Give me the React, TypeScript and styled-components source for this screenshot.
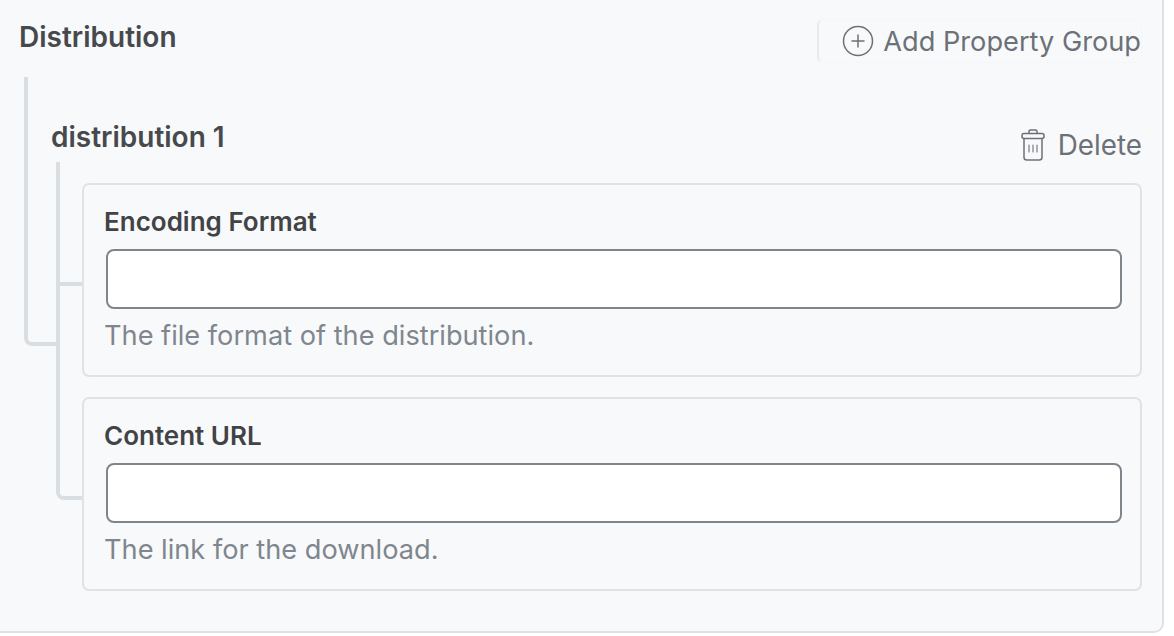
import styled, { createGlobalStyle } from 'styled-components'

const GlobalStyle = createGlobalStyle`
  html, body {
    margin: 0;
    padding: 0;
    background: #fff;
  }
  body {
    font-family: Inter, "Liberation Sans", sans-serif;
    overflow: hidden;
  }
`

const Panel = styled.section`
  box-sizing: border-box;
  width: 1164px;
  height: 633px;
  padding: 19px 20px 0 19px;
  background: #f8f9fb;
  border-right: 2px solid #dee2e6;
  border-bottom: 2px solid #dee2e6;
  border-bottom-right-radius: 10px;
`

const Header = styled.header`
  display: flex;
  justify-content: space-between;
  align-items: flex-start;
  height: 58px;
`

const Title = styled.h2`
  margin: 0;
  font-size: 28px;
  line-height: 36px;
  font-weight: 600;
  color: #47494c;
`

const AddButton = styled.button`
  display: flex;
  align-items: center;
  gap: 9px;
  box-sizing: border-box;
  height: 44px;
  padding: 0 0 0 23px;
  background: none;
  border: 1px solid #f5f6f9;
  border-left: 2px solid #e8eaee;
  border-radius: 6px;
  font: 400 27.2px Inter, "Liberation Sans", sans-serif;
  color: #6c7178;
`

const Group = styled.div`
  position: relative;
  margin-left: 7px;
  padding: 40px 0 0 25px;

  &::before {
    content: '';
    position: absolute;
    left: -2px;
    top: 0;
    width: 31px;
    height: 265px;
    border-left: 4px solid #d9dee3;
    border-bottom: 4px solid #d9dee3;
    border-bottom-left-radius: 8px;
  }
`

const GroupHeader = styled.div`
  display: flex;
  justify-content: space-between;
  align-items: flex-start;
  height: 66px;
`

const GroupTitle = styled.h3`
  margin: 0;
  font-size: 28px;
  line-height: 40px;
  font-weight: 600;
  color: #47494c;
`

const DeleteButton = styled.button`
  display: flex;
  align-items: center;
  gap: 13px;
  height: 34px;
  margin-top: 11px;
  padding: 0;
  background: none;
  border: 0;
  font: 400 27.8px Inter, "Liberation Sans", sans-serif;
  color: #6c7178;
`

const Fields = styled.div`
  position: relative;
  display: flex;
  flex-direction: column;
  gap: 20px;
  margin-left: 31px;

  &::before {
    content: '';
    position: absolute;
    left: -26px;
    top: -21px;
    bottom: 91px;
    width: 22px;
    border-left: 4px solid #d9dee3;
    border-bottom: 4px solid #d9dee3;
    border-bottom-left-radius: 8px;
  }
`

const FieldCard = styled.div<{ $branch: boolean }>`
  position: relative;
  box-sizing: border-box;
  height: 194px;
  padding: 20px 18px 0 20px;
  border: 2px solid #dfe3e7;
  border-radius: 7px;
  background: #f8f9fb;

  &::before {
    content: '';
    display: ${p => (p.$branch ? 'block' : 'none')};
    position: absolute;
    left: -24px;
    top: 97px;
    width: 22px;
    height: 4px;
    background: #d9dee3;
  }
`

const FieldLabel = styled.label`
  display: block;
  height: 44px;
  font-size: 26px;
  line-height: 34px;
  font-weight: 600;
  color: #414346;
`

const TextInput = styled.input`
  display: block;
  box-sizing: border-box;
  width: 1016px;
  height: 60px;
  margin-left: 2px;
  background: #fff;
  border: 2px solid #7f858c;
  border-radius: 8px;
  outline: none;
`

const Help = styled.p`
  margin: 10px 0 0;
  font-size: 27.2px;
  line-height: 34px;
  color: #7f868d;
`

const PlusCircle = () => (
  <svg width="32" height="32" viewBox="0 0 32 32" fill="none" stroke="#6c7178" strokeWidth="1.5" strokeLinecap="round">
    <circle cx="16" cy="16" r="14.5" />
    <path d="M16 10v12M10 16h12" />
  </svg>
)

const TrashCan = () => (
  <svg width="24" height="32" viewBox="0 0 24 32" fill="none" stroke="#6c7178" strokeWidth="1.5" strokeLinecap="round" strokeLinejoin="round">
    <path d="M8 4.5V2.4C8 1.6 8.6 1 9.4 1h5.2c.8 0 1.4.6 1.4 1.4v2.1" />
    <rect x="1" y="4.5" width="22" height="5" rx="2" />
    <path d="M3 9.5v18.7c0 1.6 1.2 2.8 2.8 2.8h12.4c1.6 0 2.8-1.2 2.8-2.8V9.5" />
    <path d="M8 16v7M12 16v7M16 16v7" strokeWidth="1.1" />
  </svg>
)

const fields = [
  { label: 'Encoding Format', help: 'The file format of the distribution.' },
  { label: 'Content URL', help: 'The link for the download.' },
]

export default function App() {
  return (
    <>
      <GlobalStyle />
      <Panel>
        <Header>
          <Title>Distribution</Title>
          <AddButton>
            <PlusCircle />
            Add Property Group
          </AddButton>
        </Header>
        <Group>
          <GroupHeader>
            <GroupTitle>distribution 1</GroupTitle>
            <DeleteButton>
              <TrashCan />
              Delete
            </DeleteButton>
          </GroupHeader>
          <Fields>
            {fields.map((f, i) => (
              <FieldCard key={f.label} $branch={i === 0}>
                <FieldLabel>{f.label}</FieldLabel>
                <TextInput type="text" />
                <Help>{f.help}</Help>
              </FieldCard>
            ))}
          </Fields>
        </Group>
      </Panel>
    </>
  )
}
